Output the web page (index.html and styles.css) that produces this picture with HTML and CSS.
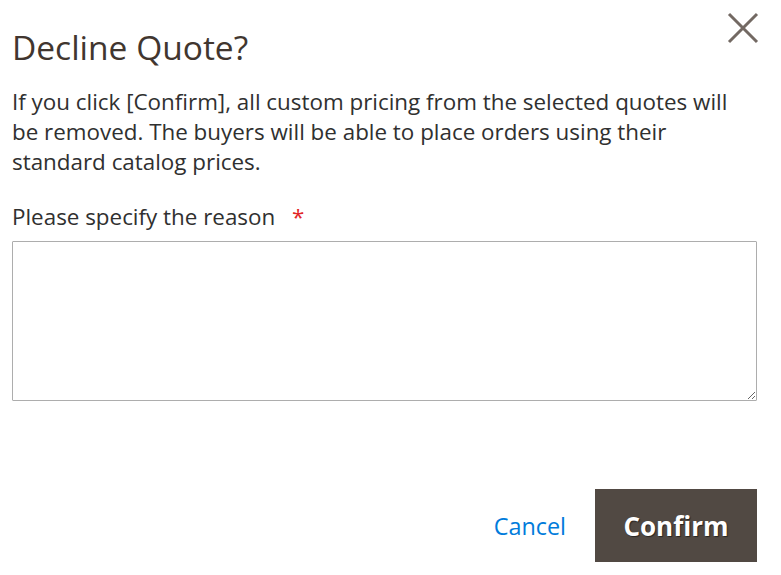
FILE: index.html
```html
<!DOCTYPE html>
<html lang="en">
<head>
<meta charset="utf-8">
<meta name="viewport" content="width=device-width,initial-scale=1">
<title>Decline Quote</title>
<link rel="stylesheet" href="styles.css">
</head>
<body>

<div class="modal">
  <header class="modal-header">
    <h1 class="modal-title">Decline Quote?</h1>
    <button class="action-close" aria-label="Close">
      <svg width="34" height="34" viewBox="0 0 34 34"><path d="M3 3L31 31M31 3L3 31" stroke="#736963" stroke-width="3"/></svg>
    </button>
  </header>

  <div class="modal-content">
    <p class="message">If you click [Confirm], all custom pricing from the selected quotes will be removed. The buyers will be able to place orders using their standard catalog prices.</p>

    <label class="field-label" for="reason">Please specify the reason <span class="required">*</span></label>
    <textarea id="reason" class="reason"></textarea>
  </div>

  <footer class="modal-footer">
    <button class="action-cancel">Cancel</button>
    <button class="action-primary">Confirm</button>
  </footer>
</div>

</body>
</html>
```

FILE: styles.css
```css
body{margin:0;background:#fff;font-family:"Open Sans","Liberation Sans",sans-serif;color:#303030;}
.modal{width:745px;padding:0 24px 0 12px;}
.modal-header{display:flex;justify-content:space-between;align-items:flex-start;}
.modal-title{margin:25px 0 0;font-size:33.5px;font-weight:400;line-height:44px;color:#41362f;}
.action-close{background:none;border:none;padding:0;margin:11px -3px 0 0;cursor:pointer;display:flex;}
.modal-content{margin-top:18px;}
.message{margin:0;font-size:22.4px;line-height:30px;color:#303030;}
.field-label{display:block;margin-top:25px;font-size:22.4px;line-height:30px;color:#303030;}
.required{color:#e22626;margin-left:11px;}
.reason{display:block;box-sizing:border-box;width:745px;height:160px;margin-top:9px;border:1px solid #adadad;border-radius:1px;resize:vertical;}
.modal-footer{display:flex;justify-content:flex-end;align-items:center;gap:29px;margin-top:88px;}
.action-cancel{background:none;border:none;padding:0;font-family:inherit;font-size:23.4px;color:#007bdb;cursor:pointer;}
.action-primary{width:162px;height:73px;background:#514943;border:none;color:#fff;font-family:inherit;font-size:26px;font-weight:700;text-shadow:1px 1px 1px rgba(0,0,0,.5);cursor:pointer;}
```
